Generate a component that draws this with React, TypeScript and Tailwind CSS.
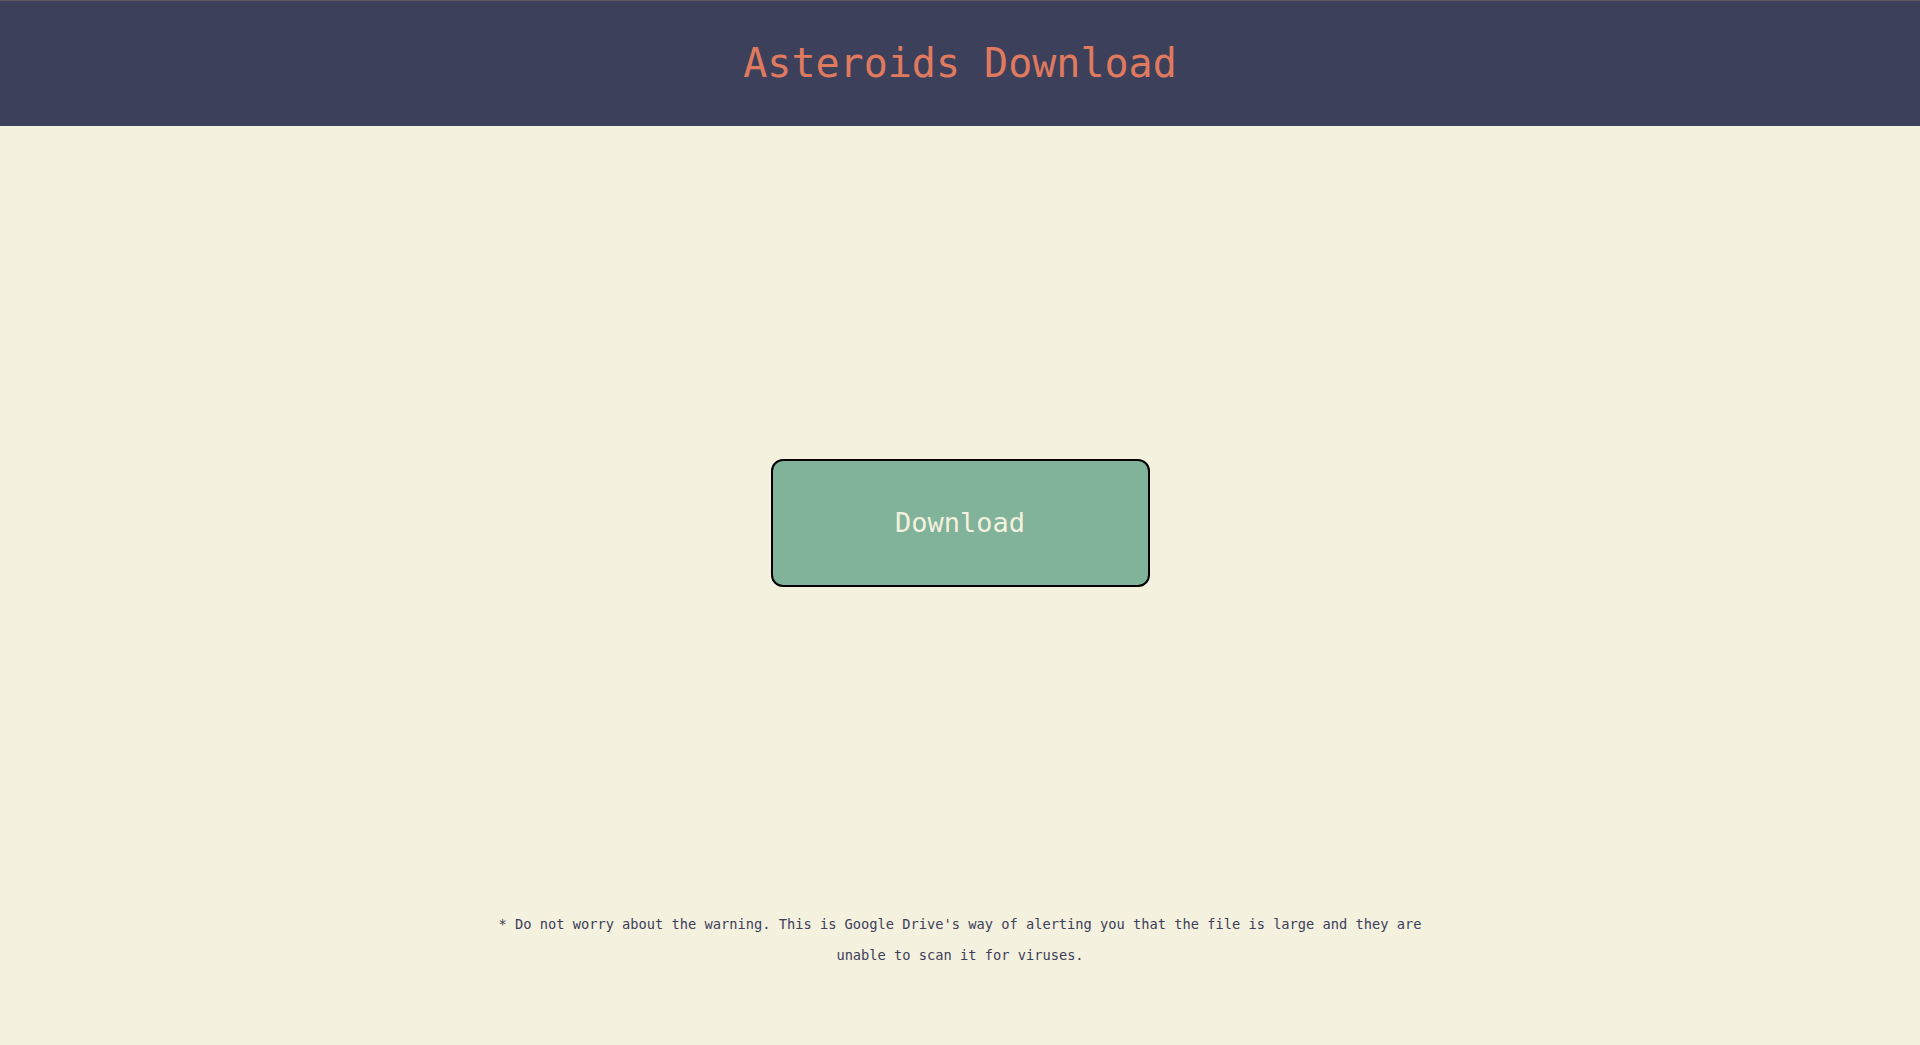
export default function App() {
  const mono = { fontFamily: '"DejaVu Sans Mono", "Liberation Mono", monospace' };

  return (
    <div className="min-h-screen bg-[#f4f1de] flex flex-col" style={mono}>
      {/* Header */}
      <header className="h-[126px] bg-[#3d405b] border-t border-[#5a5a5a] flex items-center justify-center">
        <h1 className="text-[40px] leading-none text-[#e07a5f] -mt-[1px]">Asteroids Download</h1>
      </header>

      {/* Download button */}
      <main className="flex justify-center mt-[333px]">
        <button className="w-[379px] h-[128px] bg-[#81b29a] border-2 border-black rounded-[12px] text-[27px] text-[#f4f1de] cursor-pointer">
          Download
        </button>
      </main>

      {/* Note */}
      <p className="w-[950px] mx-auto mt-[322px] text-center text-[13.7px] leading-[31px] text-[#3d405b]">
        * Do not worry about the warning. This is Google Drive's way of alerting you that the file is large and they are unable to scan it for viruses.
      </p>
    </div>
  );
}
